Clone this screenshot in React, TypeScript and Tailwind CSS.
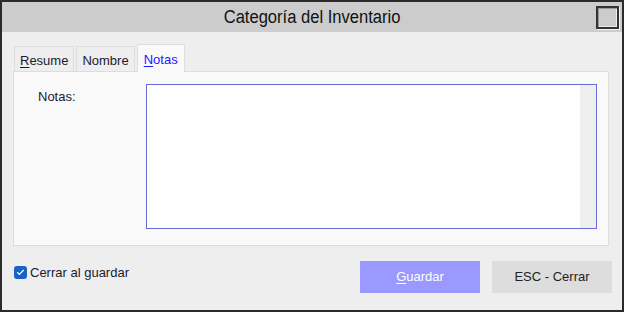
import { Check } from 'lucide-react';

const tabs = [
  { key: 'resume', first: 'R', rest: 'esume' },
  { key: 'nombre', first: '', rest: 'Nombre' },
];

export default function App() {
  return (
    <div className="flex h-[312px] w-[624px] flex-col border-2 border-[#2b2b2b] bg-[#eeeeee] font-[family-name:'Liberation_Sans',Arial,sans-serif] text-[13px] text-[#1a1a2e]">
      <div className="grid h-[30px] shrink-0 grid-cols-[1fr_auto_1fr] items-center bg-[#cccccc]">
        <div />
        <span className="inline-block scale-x-[0.92] font-[family-name:'Liberation_Sans',sans-serif] text-[18px] leading-none text-[#111]">
          Categoría del Inventario
        </span>
        <div className="flex justify-end pr-[3px]">
          <div className="h-[23px] w-[23px] border-2 border-[#333] bg-[#cccccc] shadow-[inset_1px_1px_0_#999,inset_-1px_-1px_0_#eee,1px_1px_0_#f4f4f4]" />
        </div>
      </div>

      <div className="flex flex-1 flex-col pl-[11px] pr-[10px] pb-[17px]">
        <div className="mt-[12px] flex items-end gap-[2px] pl-[1px]">
          {tabs.map((t) => (
            <div
              key={t.key}
              className="relative flex h-[25px] items-center border border-b-0 border-[#dddddd] bg-[#eeeeee] px-[5px] pt-[4px]"
            >
              {t.first && <span className="underline underline-offset-2">{t.first}</span>}
              {t.rest}
            </div>
          ))}
          <div className="relative z-10 -mb-px flex h-[28px] items-start border border-b-0 border-[#dddddd] bg-[#f9f9f9] px-[6px] pt-[5px] text-[#1a1aff]">
            <span className="underline underline-offset-2">N</span>otas
          </div>
        </div>

        <div className="mr-[3px] flex h-[175px] border border-[#dddddd] bg-[#f9f9f9] pt-[12px] pl-[24px]">
          <div className="w-[108px] pt-[3px] text-[#1a1a2e]">Notas:</div>
          <div className="flex h-[145px] w-[451px] border border-[#6b6bd6] bg-white">
            <div className="flex-1" />
            <div className="w-[16px] bg-[#efefef]" />
          </div>
        </div>

        <div className="mt-auto flex items-start">
          <label className="mt-[2px] flex items-center gap-[3px] pl-[1px]">
            <span className="flex h-[13px] w-[13px] items-center justify-center rounded-[3px] bg-[#1a63c4]">
              <Check size={9} strokeWidth={3} className="text-white" />
            </span>
            <span className="text-[#1a1a2e]">Cerrar al guardar</span>
          </label>
          <div className="ml-auto flex gap-[12px]">
            <button type="button" className="h-[32px] w-[120px] bg-[#9999ff] text-[13px] text-white">
              <span className="underline underline-offset-2">G</span>uardar
            </button>
            <button type="button" className="h-[32px] w-[120px] bg-[#dddddd] text-[13px] text-[#222]">
              ESC - Cerrar
            </button>
          </div>
        </div>
      </div>
    </div>
  );
}
